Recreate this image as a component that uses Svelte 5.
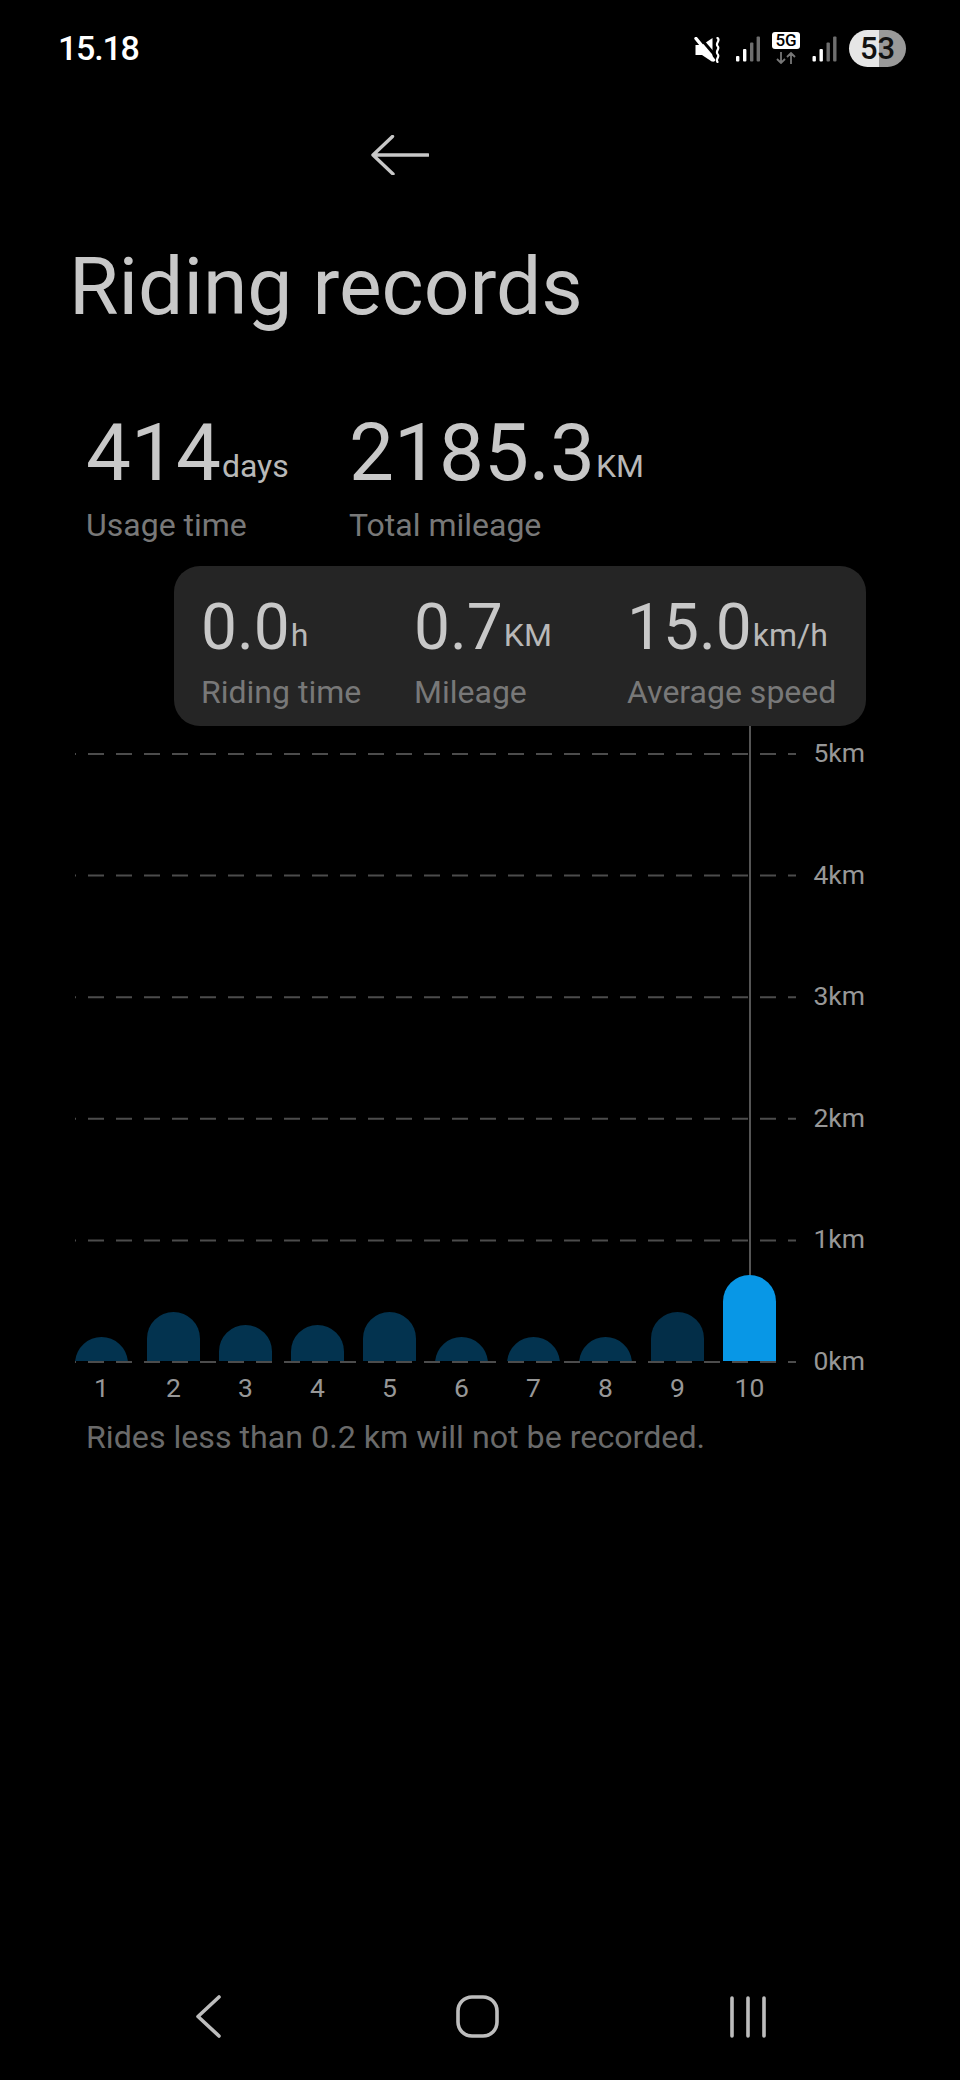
<script lang="ts">
    type Bar = { day: number; height: number };

    const bars: Bar[] = [
        { day: 1, height: 24 },
        { day: 2, height: 49 },
        { day: 3, height: 36 },
        { day: 4, height: 36 },
        { day: 5, height: 49 },
        { day: 6, height: 24 },
        { day: 7, height: 24 },
        { day: 8, height: 24 },
        { day: 9, height: 49 },
        { day: 10, height: 86 },
    ];
    const ticks = [5, 4, 3, 2, 1, 0];

    const BAR_W = 53;
    const BAR_R = 26.5;
    const BAR_STEP = 72;
    const BAR_X0 = 75;
    const BAR_BOTTOM = 1361;
    const ZERO_Y = 1362;
    const TICK_STEP = 121.6;

    function barPath(i: number, h: number) {
        const x = BAR_X0 + i * BAR_STEP;
        const top = BAR_BOTTOM - h;
        if (h >= BAR_R) {
            return `M${x} ${BAR_BOTTOM}V${top + BAR_R}A${BAR_R} ${BAR_R} 0 0 1 ${x + BAR_W} ${top + BAR_R}V${BAR_BOTTOM}Z`;
        }
        // shorter than the corner radius: only the dome of the bar shows
        const half = Math.sqrt(BAR_R * BAR_R - (BAR_R - h) * (BAR_R - h));
        const mid = x + BAR_W / 2;
        return `M${mid - half} ${BAR_BOTTOM}A${BAR_R} ${BAR_R} 0 0 1 ${mid + half} ${BAR_BOTTOM}Z`;
    }

    function barFill(day: number) {
        if (day === 10) return "#0897e6";
        return day === 9 ? "#032e48" : "#03334f";
    }
</script>

{#snippet signal(width: number)}
    <svg class="signal" {width} height="26" viewBox="0 0 24 26" aria-hidden="true">
        <rect x="0" y="20" width="3.4" height="5.5" rx="1" fill="#fff" />
        <rect x="7" y="13" width="3.4" height="12.5" rx="1" fill="#fff" />
        <rect x="14" y="6.5" width="3.4" height="19" rx="1" fill="#6e6e6e" />
        <rect x="20.6" y="0.5" width="3.4" height="25" rx="1" fill="#6e6e6e" />
    </svg>
{/snippet}

<div class="page">
    <header class="status">
        <span class="time">15.18</span>
        <div class="tray">
            <svg class="mute" width="28" height="26" viewBox="0 0 27 26" aria-hidden="true">
                <path d="M1 8h6.500L18 1v24L7.500 18H1z" fill="#fff" />
                <path d="M4 -1L22 20" stroke="#000" stroke-width="3" />
                <path d="M1.500 1.500L19 23" stroke="#fff" stroke-width="3.400" stroke-linecap="round" />
                <path d="M23 1c3.500 2.500-2.500 5 0 8c3 2.500-2.500 5 0 8c3 2.500-2.500 5 0 8" fill="none" stroke="#fff" stroke-width="2.200" stroke-linecap="round" />
            </svg>
            {@render signal(24)}
            <div class="net">
                <span class="net-label">5G</span>
                <svg width="20" height="12" viewBox="0 0 20 12" aria-hidden="true">
                    <path d="M5 0v11M1 7l4 4 4-4M15 12V1M11 5l4-4 4 4" fill="none" stroke="#777" stroke-width="1.800" />
                </svg>
            </div>
            {@render signal(25)}
            <div class="battery">53</div>
        </div>
    </header>

    <svg class="back" width="58" height="40" viewBox="0 0 58 40" aria-hidden="true">
        <path d="M57 20H2M21.500 1.500L2 20l20 19" fill="none" stroke="#c8c8c8" stroke-width="3.400" stroke-linecap="round" stroke-linejoin="round" />
    </svg>

    <h1 class="title">Riding records</h1>

    <section class="totals">
        <div class="total total-days">
            <div class="value">414<span class="unit">days</span></div>
            <div class="label">Usage time</div>
        </div>
        <div class="total">
            <div class="value">2185.3<span class="unit">KM</span></div>
            <div class="label">Total mileage</div>
        </div>
    </section>

    <section class="card">
        <div>
            <div class="value">0.0<span class="unit">h</span></div>
            <div class="label">Riding time</div>
        </div>
        <div>
            <div class="value">0.7<span class="unit">KM</span></div>
            <div class="label">Mileage</div>
        </div>
        <div>
            <div class="value">15.0<span class="unit">km/h</span></div>
            <div class="label">Average speed</div>
        </div>
    </section>

    <svg class="chart" width="960" height="684" viewBox="0 726 960 684">
        {#each ticks as tick (tick)}
            {@const y = ZERO_Y - tick * TICK_STEP}
            <line class="grid" x1="75" x2="796" y1={y} y2={y} />
            <text class="tick" x="865" y={y + 8}>{tick}km</text>
        {/each}

        <line class="cursor" x1="750" x2="750" y1="726" y2="1280" />

        {#each bars as bar, i (bar.day)}
            <path d={barPath(i, bar.height)} fill={barFill(bar.day)} />
            <text class="day" x={BAR_X0 + i * BAR_STEP + BAR_W / 2} y="1397">{bar.day}</text>
        {/each}
    </svg>

    <p class="note">Rides less than 0.2 km will not be recorded.</p>

    <nav class="nav">
        <svg width="25" height="43" viewBox="0 0 25 43" aria-hidden="true">
            <path d="M23 2L2 21.500 23 41" fill="none" stroke="#bdbdbd" stroke-width="3.600" stroke-linecap="round" stroke-linejoin="round" />
        </svg>
        <svg class="nav-home" width="43" height="43" viewBox="0 0 43 43" aria-hidden="true">
            <rect x="2" y="2" width="39" height="39" rx="14" fill="none" stroke="#bdbdbd" stroke-width="3.600" />
        </svg>
        <svg class="nav-recents" width="36" height="42" viewBox="0 0 36 42" aria-hidden="true">
            <path d="M2 2v38M18 2v38M34 2v38" fill="none" stroke="#bdbdbd" stroke-width="3.600" stroke-linecap="round" />
        </svg>
    </nav>
</div>

<style>
    :global(body) {
        background: #000;
    }

    .page {
        display: flex;
        flex-direction: column;
        width: 960px;
        height: 2080px;
        background: #000;
        font-family: Roboto, "Liberation Sans", sans-serif;
        color: #c8c8c8;
        overflow: hidden;
    }

    .status {
        display: flex;
        align-items: center;
        justify-content: space-between;
        flex-shrink: 0;
        height: 96px;
        padding: 0 54px 0 58px;
    }

    .time {
        color: #fff;
        font-size: 34px;
        font-weight: 500;
        letter-spacing: -1.2px;
    }

    .tray {
        display: flex;
        align-items: center;
        gap: 12px;
    }

    .mute {
        margin: 3px 2px 0 0;
    }

    .signal {
        margin-top: 1px;
    }

    .net {
        display: flex;
        flex-direction: column;
        align-items: center;
        gap: 3px;
    }

    .net-label {
        width: 28px;
        height: 17px;
        border-radius: 3px;
        background: #fff;
        color: #000;
        font-size: 17px;
        font-weight: 500;
        line-height: 17px;
        text-align: center;
    }

    .battery {
        width: 57px;
        height: 37px;
        border-radius: 19px;
        background: linear-gradient(to right, #e6e6e6 30px, #999 30px);
        color: #111;
        font-size: 31px;
        font-weight: 500;
        line-height: 37px;
        text-align: center;
    }

    .back {
        flex-shrink: 0;
        margin: 39px 0 0 371px;
    }

    .title {
        margin: 67px 0 0 69px;
        color: #c8c8c8;
        font-size: 80.4px;
        font-weight: 400;
        line-height: 90px;
    }

    .totals {
        display: flex;
        margin: 81px 0 0 86px;
    }

    .total-days {
        width: 263px;
    }

    .value {
        font-size: 80px;
        line-height: 80px;
        white-space: nowrap;
    }

    .unit {
        margin-left: 1px;
        color: #b8b8b8;
        font-size: 32px;
        line-height: 1;
        vertical-align: 3px;
    }

    .label {
        margin-top: 12px;
        color: #787878;
        font-size: 32px;
        line-height: 40px;
        white-space: nowrap;
    }

    .card {
        display: grid;
        grid-template-columns: repeat(3, 213px);
        flex-shrink: 0;
        box-sizing: border-box;
        width: 692px;
        height: 160px;
        margin: 21px 0 0 174px;
        padding: 30px 0 0 27px;
        border-radius: 26px;
        background: #252525;
    }

    .card .value {
        font-size: 64px;
        line-height: 64px;
    }

    .chart {
        display: block;
        flex-shrink: 0;
    }

    .grid {
        stroke: #4c4c4c;
        stroke-width: 2;
        stroke-dasharray: 16 12;
        stroke-dashoffset: 15;
    }

    .cursor {
        stroke: #555;
        stroke-width: 2;
    }

    .tick {
        fill: #979797;
        font-size: 26.5px;
        text-anchor: end;
    }

    .day {
        fill: #979797;
        font-size: 26.5px;
        text-anchor: middle;
    }

    .note {
        margin: 7px 0 0 86px;
        color: #6a6a6a;
        font-size: 32.2px;
        line-height: 40px;
    }

    .nav {
        display: flex;
        align-items: center;
        margin-top: auto;
        padding: 0 0 42px 196px;
    }

    .nav-home {
        margin-left: 235px;
    }

    .nav-recents {
        margin-left: 231px;
    }
</style>
